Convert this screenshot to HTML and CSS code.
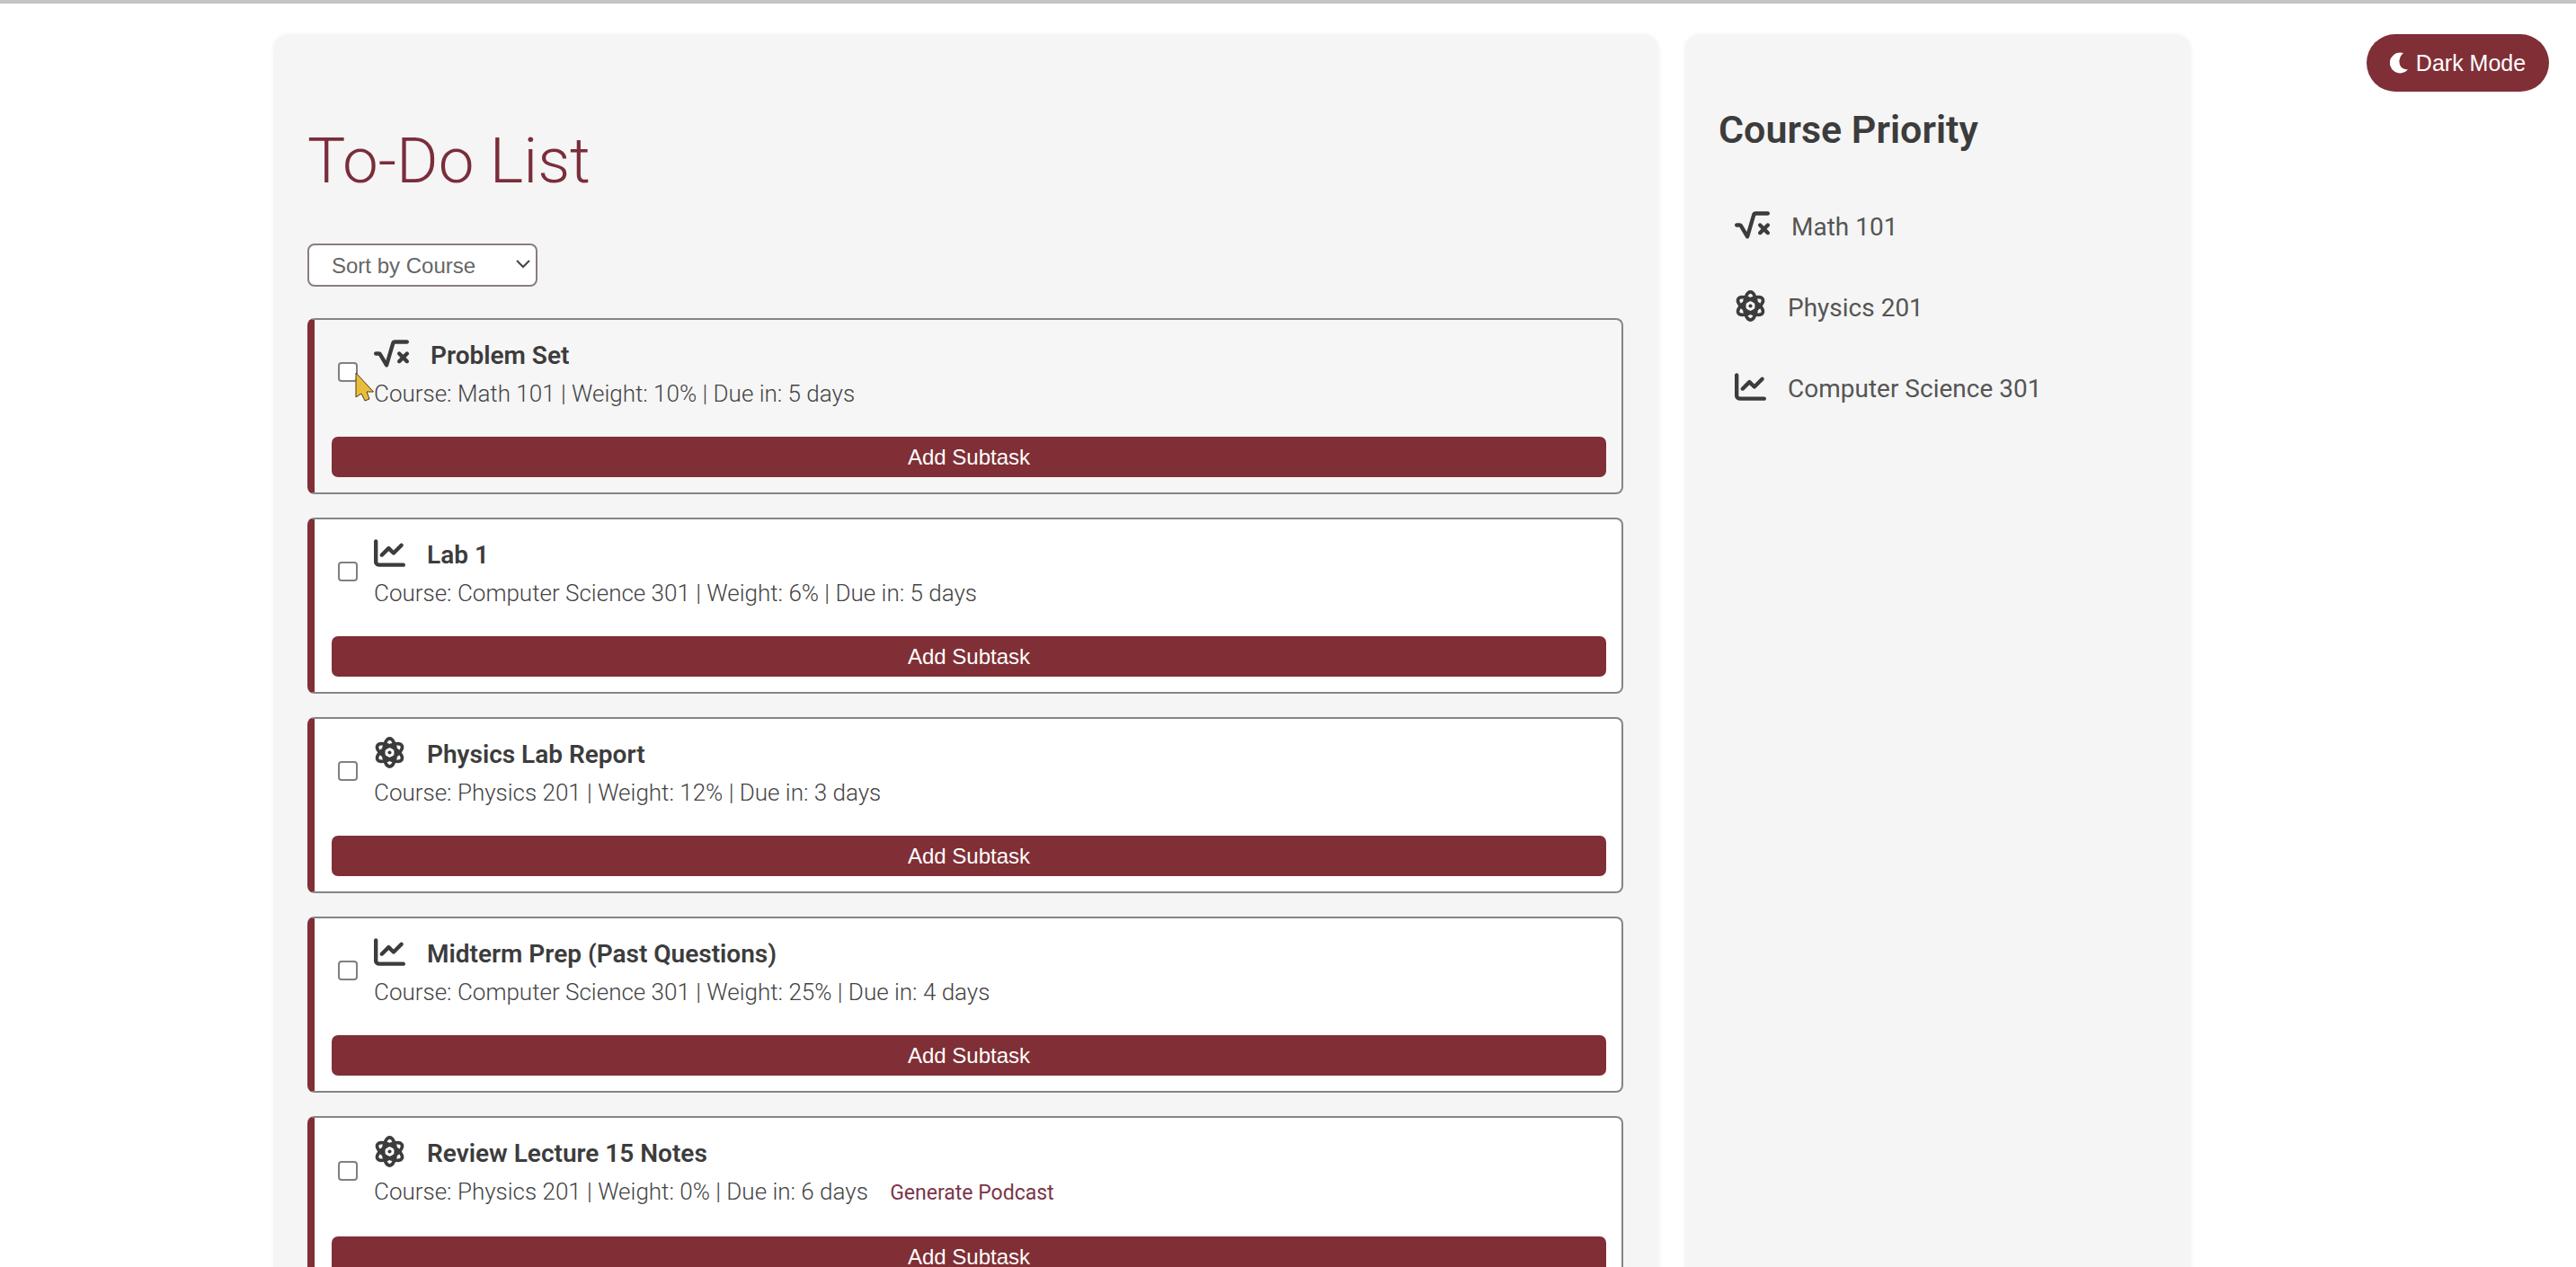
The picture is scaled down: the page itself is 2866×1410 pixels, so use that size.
FILE: index.html
```html
<!DOCTYPE html>
<html lang="en">
<head>
<meta charset="utf-8">
<title>To-Do List</title>
<link rel="stylesheet" href="styles.css">
</head>
<body>
<svg class="sprite" aria-hidden="true">
  <symbol id="icon-root" viewBox="0 0 576 512"><path d="M282.6 78.1c8-27.3 33-46.1 61.4-46.1H544c17.7 0 32 14.3 32 32s-14.3 32-32 32H344L238.7 457c-3.6 12.3-14.1 21.2-26.8 22.8s-25.1-4.6-31.5-15.6L77.6 288H32c-17.7 0-32-14.3-32-32s14.3-32 32-32H77.6c22.8 0 43.8 12.1 55.3 31.8l65.2 111.8L282.6 78.1zM393.4 233.4c12.5-12.5 32.8-12.5 45.3 0L480 274.7l41.4-41.4c12.5-12.5 32.8-12.5 45.3 0s12.5 32.8 0 45.3L525.3 320l41.4 41.4c12.5 12.5 12.5 32.8 0 45.3s-32.8 12.5-45.3 0L480 365.3l-41.4 41.4c-12.5 12.5-32.8 12.5-45.3 0s-12.5-32.8 0-45.3L434.7 320l-41.4-41.4c-12.5-12.5-12.5-32.8 0-45.3z"/></symbol>
  <symbol id="icon-chart" viewBox="0 0 512 512"><path d="M64 64c0-17.7-14.3-32-32-32S0 46.3 0 64V400c0 44.2 35.8 80 80 80H480c17.7 0 32-14.3 32-32s-14.3-32-32-32H80c-8.8 0-16-7.2-16-16V64zm406.6 86.6c12.5-12.5 12.5-32.8 0-45.3s-32.8-12.5-45.3 0L320 210.7l-57.4-57.4c-12.5-12.5-32.8-12.5-45.3 0l-112 112c-12.5 12.5-12.5 32.8 0 45.3s32.8 12.5 45.3 0L240 221.3l57.4 57.4c12.5 12.5 32.8 12.5 45.3 0l128-128z"/></symbol>
  <symbol id="icon-atom" viewBox="0 0 512 512">
    <g fill="none" stroke="currentColor" stroke-width="54">
      <ellipse cx="256" cy="256" rx="100" ry="229"/>
      <ellipse cx="256" cy="256" rx="100" ry="229" transform="rotate(60 256 256)"/>
      <ellipse cx="256" cy="256" rx="100" ry="229" transform="rotate(120 256 256)"/>
    </g>
    <circle cx="256" cy="256" r="30"/>
  </symbol>
  <symbol id="icon-moon" viewBox="0 0 20 24"><path d="M15 1A11.500 11.500 0 1 0 20 19.500Q9.500 19 10.500 9Q11.500 3.500 15 1Z"/></symbol>
</svg>

<button class="theme-toggle" type="button"><svg class="moon" aria-hidden="true"><use href="#icon-moon"/></svg>Dark Mode</button>

<div class="layout">
  <main class="panel todo">
    <h1>To-Do List</h1>
    <div class="sort">
      <select aria-label="Sort tasks">
        <option>Sort by Course</option>
        <option>Sort by Weight</option>
        <option>Sort by Due Date</option>
      </select>
      <svg class="chevron" viewBox="0 0 16 10" aria-hidden="true"><path d="M1 1L8 8L15 1"/></svg>
    </div>
    <ul class="tasks">
      <li class="task hovered">
        <div class="task-row">
          <input type="checkbox" id="t1">
          <div class="task-body">
            <label class="task-title" for="t1"><svg class="icon wide" aria-hidden="true"><use href="#icon-root"/></svg>Problem Set</label>
            <p class="meta">Course: Math 101 | Weight: 10% | Due in: 5 days</p>
          </div>
          <svg class="pointer" viewBox="0 0 22 34" aria-hidden="true"><path d="M1 1V28L7 24L11 32L16 30L13 22H20.500Z"/></svg>
        </div>
        <button class="add" type="button">Add Subtask</button>
      </li>
      <li class="task">
        <div class="task-row">
          <input type="checkbox" id="t2">
          <div class="task-body">
            <label class="task-title" for="t2"><svg class="icon" aria-hidden="true"><use href="#icon-chart"/></svg>Lab 1</label>
            <p class="meta">Course: Computer Science 301 | Weight: 6% | Due in: 5 days</p>
          </div>
        </div>
        <button class="add" type="button">Add Subtask</button>
      </li>
      <li class="task">
        <div class="task-row">
          <input type="checkbox" id="t3">
          <div class="task-body">
            <label class="task-title" for="t3"><svg class="icon" aria-hidden="true"><use href="#icon-atom"/></svg>Physics Lab Report</label>
            <p class="meta">Course: Physics 201 | Weight: 12% | Due in: 3 days</p>
          </div>
        </div>
        <button class="add" type="button">Add Subtask</button>
      </li>
      <li class="task">
        <div class="task-row">
          <input type="checkbox" id="t4">
          <div class="task-body">
            <label class="task-title" for="t4"><svg class="icon" aria-hidden="true"><use href="#icon-chart"/></svg>Midterm Prep (Past Questions)</label>
            <p class="meta">Course: Computer Science 301 | Weight: 25% | Due in: 4 days</p>
          </div>
        </div>
        <button class="add" type="button">Add Subtask</button>
      </li>
      <li class="task">
        <div class="task-row">
          <input type="checkbox" id="t5">
          <div class="task-body">
            <label class="task-title" for="t5"><svg class="icon" aria-hidden="true"><use href="#icon-atom"/></svg>Review Lecture 15 Notes</label>
            <p class="meta">Course: Physics 201 | Weight: 0% | Due in: 6 days <a class="podcast" href="#podcast">Generate Podcast</a></p>
          </div>
        </div>
        <button class="add" type="button">Add Subtask</button>
      </li>
    </ul>
  </main>

  <aside class="panel priority">
    <h2>Course Priority</h2>
    <ul class="courses">
      <li><svg class="icon wide" aria-hidden="true"><use href="#icon-root"/></svg>Math 101</li>
      <li><svg class="icon" aria-hidden="true"><use href="#icon-atom"/></svg>Physics 201</li>
      <li><svg class="icon" aria-hidden="true"><use href="#icon-chart"/></svg>Computer Science 301</li>
    </ul>
  </aside>
</div>
</body>
</html>
```
FILE: styles.css
```css
* {
  box-sizing: border-box;
}

html {
  height: 100%;
  overflow: hidden;
}

body {
  height: 100%;
  margin: 0;
  overflow: hidden;
  border-top: 4px solid #c4c4c4;
  background: #fff;
  color: #555;
  font-family: Roboto, sans-serif;
  font-size: 26px;
  line-height: 36px;
}

ul {
  margin: 0;
  padding: 0;
  list-style: none;
}

.sprite {
  display: none;
}

.layout {
  display: grid;
  grid-template-columns: minmax(0, 1fr) 564px;
  gap: 28px;
  max-width: 2134px;
  margin: 34px auto 0;
  position: relative;
  right: 62px;
}

.panel {
  padding: 38px 40px 38px 38px;
  border-radius: 18px;
  background: #f5f5f5;
  box-shadow: 0 0 6px #f5f5f5;
}

h1 {
  margin: 61px 0 50px;
  color: #7b2d3a;
  font-size: 71px;
  font-weight: 300;
  line-height: 84px;
}

h2 {
  margin: 43px 0 39px;
  color: #3c3c3c;
  font-size: 43px;
  font-weight: 600;
  line-height: 50px;
}

.sort {
  position: relative;
  width: 256px;
  margin-bottom: 35px;
}

.sort select {
  appearance: none;
  display: block;
  width: 100%;
  height: 48px;
  padding: 0 40px 0 25px;
  border: 2px solid #8b7d80;
  border-radius: 8px;
  background: #fff;
  color: #666;
  font: 24px "Liberation Sans", sans-serif;
}

.chevron {
  position: absolute;
  top: 18px;
  right: 8px;
  width: 16px;
  height: 10px;
  fill: none;
  stroke: #444;
  stroke-width: 2px;
  pointer-events: none;
}

.tasks {
  display: grid;
  gap: 26px;
}

.task {
  padding: 16px 17px 17px 19px;
  border: 2px solid #858585;
  border-left: 8px solid #802f36;
  border-radius: 8px;
  background: #fff;
}

.task.hovered {
  background: #f6f6f6;
}

.task-row {
  display: flex;
  align-items: center;
  position: relative;
  margin-bottom: 30px;
}

.task-row input {
  appearance: none;
  width: 22px;
  height: 22px;
  margin: 0 18px 0 7px;
  border: 2px solid #808080;
  border-radius: 4px;
  background: #fff;
}

.task-title {
  display: flex;
  align-items: center;
  gap: 24px;
  height: 48px;
  color: #3c3c3c;
  font-size: 28px;
  font-weight: 600;
}

.icon {
  width: 35px;
  height: 35px;
  margin-bottom: 5px;
  color: #3c3c3c;
  fill: currentColor;
}

.icon.wide {
  width: 39px;
}

.meta {
  margin: 0;
  color: #444;
  font-weight: 300;
}

.podcast {
  margin-left: 18px;
  color: #7b3548;
  font-size: 23px;
  font-weight: 400;
  text-decoration: none;
}

.add {
  display: block;
  width: 100%;
  height: 45px;
  padding: 0;
  border: 0;
  border-radius: 7px;
  background: #802f36;
  color: #fff;
  font: 24px "Liberation Sans", sans-serif;
}

.pointer {
  position: absolute;
  left: 26px;
  top: 42px;
  width: 22px;
  height: 34px;
  fill: #e9bd3a;
  stroke: #4a3c1c;
  stroke-width: 1px;
}

.courses li {
  display: flex;
  align-items: center;
  gap: 24px;
  height: 90px;
  padding-left: 18px;
  font-size: 28px;
}

.theme-toggle {
  position: absolute;
  top: 38px;
  right: 30px;
  display: flex;
  align-items: center;
  justify-content: center;
  gap: 9px;
  width: 203px;
  height: 64px;
  border: 0;
  border-radius: 32px;
  background: #802f36;
  color: #fff;
  font: 25px "Liberation Sans", sans-serif;
}

.moon {
  width: 20px;
  height: 24px;
  fill: #fff;
}
```
